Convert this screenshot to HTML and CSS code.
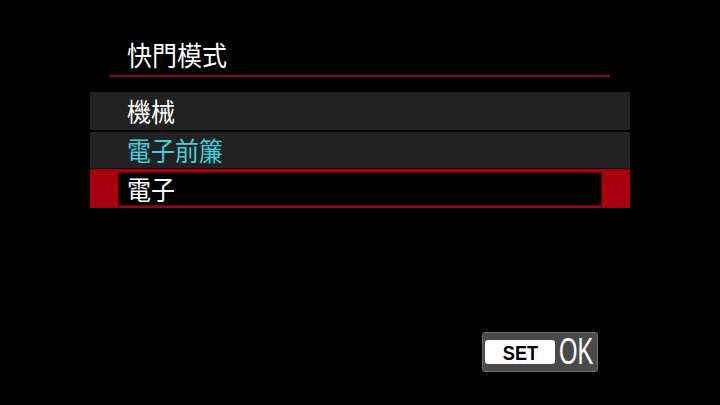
FILE: index.html
```html
<!DOCTYPE html>
<html lang="zh-Hant">
<head>
<meta charset="utf-8">
<title>快門模式</title>
<link rel="stylesheet" href="styles.css">
</head>
<body>
<div class="screen">
  <div class="header">
    <h1 class="title">快門模式</h1>
  </div>
  <div class="menu">
    <div class="row first"><span class="label">機械</span></div>
    <div class="row second"><span class="label current">電子前簾</span></div>
    <div class="row selected"><div class="inner"><span class="label">電子</span></div></div>
  </div>
  <div class="footer">
    <div class="setok">
      <span class="set"><span class="set-text">SET</span></span>
      <span class="ok">OK</span>
    </div>
  </div>
</div>
</body>
</html>
```
FILE: styles.css
```css
html, body {
  margin: 0;
  padding: 0;
  background: #000;
}
.screen {
  width: 720px;
  height: 405px;
  background: #000;
  display: flex;
  flex-direction: column;
  font-family: "Noto Sans CJK TC", "Noto Sans", sans-serif;
  color: #fff;
  box-sizing: border-box;
}
.header {
  margin: 0 110px 0 109px;
  padding: 34px 0 0 18px;
  height: 41px;
  border-bottom: 2px solid #8e0a14;
  box-sizing: content-box;
}
.title {
  margin: 0;
  font-size: 25px;
  font-weight: 400;
  line-height: 41px;
  transform: scaleY(1.08);
  transform-origin: left center;
}
.menu {
  margin: 15px 90px 0 90px;
  display: flex;
  flex-direction: column;
}
.row {
  box-sizing: border-box;
  background: #222222;
  display: flex;
  align-items: center;
  padding-left: 37px;
}
.row.first {
  height: 38px;
  margin-bottom: 2px;
}
.row.second {
  height: 36px;
  margin-bottom: 1px;
}
.label {
  display: inline-block;
  font-size: 24px;
  line-height: 30px;
  color: #fff;
  transform: scaleY(1.08);
  transform-origin: left center;
}
.label.current {
  color: #40cfdf;
}
.row.selected {
  height: 39px;
  background: #a6000f;
  padding: 3px 28px 2px 28px;
  align-items: stretch;
}
.inner {
  flex: 1;
  background: #000;
  border: 1px solid #5c0008;
  display: flex;
  align-items: center;
  padding-left: 8px;
}
.footer {
  margin-top: auto;
  margin-bottom: 33px;
  display: flex;
  justify-content: flex-end;
  padding-right: 122px;
}
.setok {
  width: 116px;
  height: 40px;
  box-sizing: border-box;
  background: #4a4a4a;
  border: 1px solid #6e6e6e;
  border-radius: 3px;
  display: flex;
  align-items: center;
  padding-left: 2px;
}
.set {
  flex: none;
  width: 70px;
  height: 24px;
  background: #fff;
  border-radius: 3px;
  color: #000;
  font-family: "Liberation Sans", sans-serif;
  font-weight: 700;
  font-size: 21px;
  line-height: 25px;
  text-align: center;
}
.set-text {
  display: inline-block;
  transform: scaleX(0.86);
}
.ok {
  flex: none;
  margin-left: 4px;
  color: #fff;
  font-family: "Liberation Sans", sans-serif;
  font-size: 36px;
  line-height: 34px;
  display: inline-block;
  transform: scaleX(0.66);
  transform-origin: left center;
  font-weight: 400;
}
```
